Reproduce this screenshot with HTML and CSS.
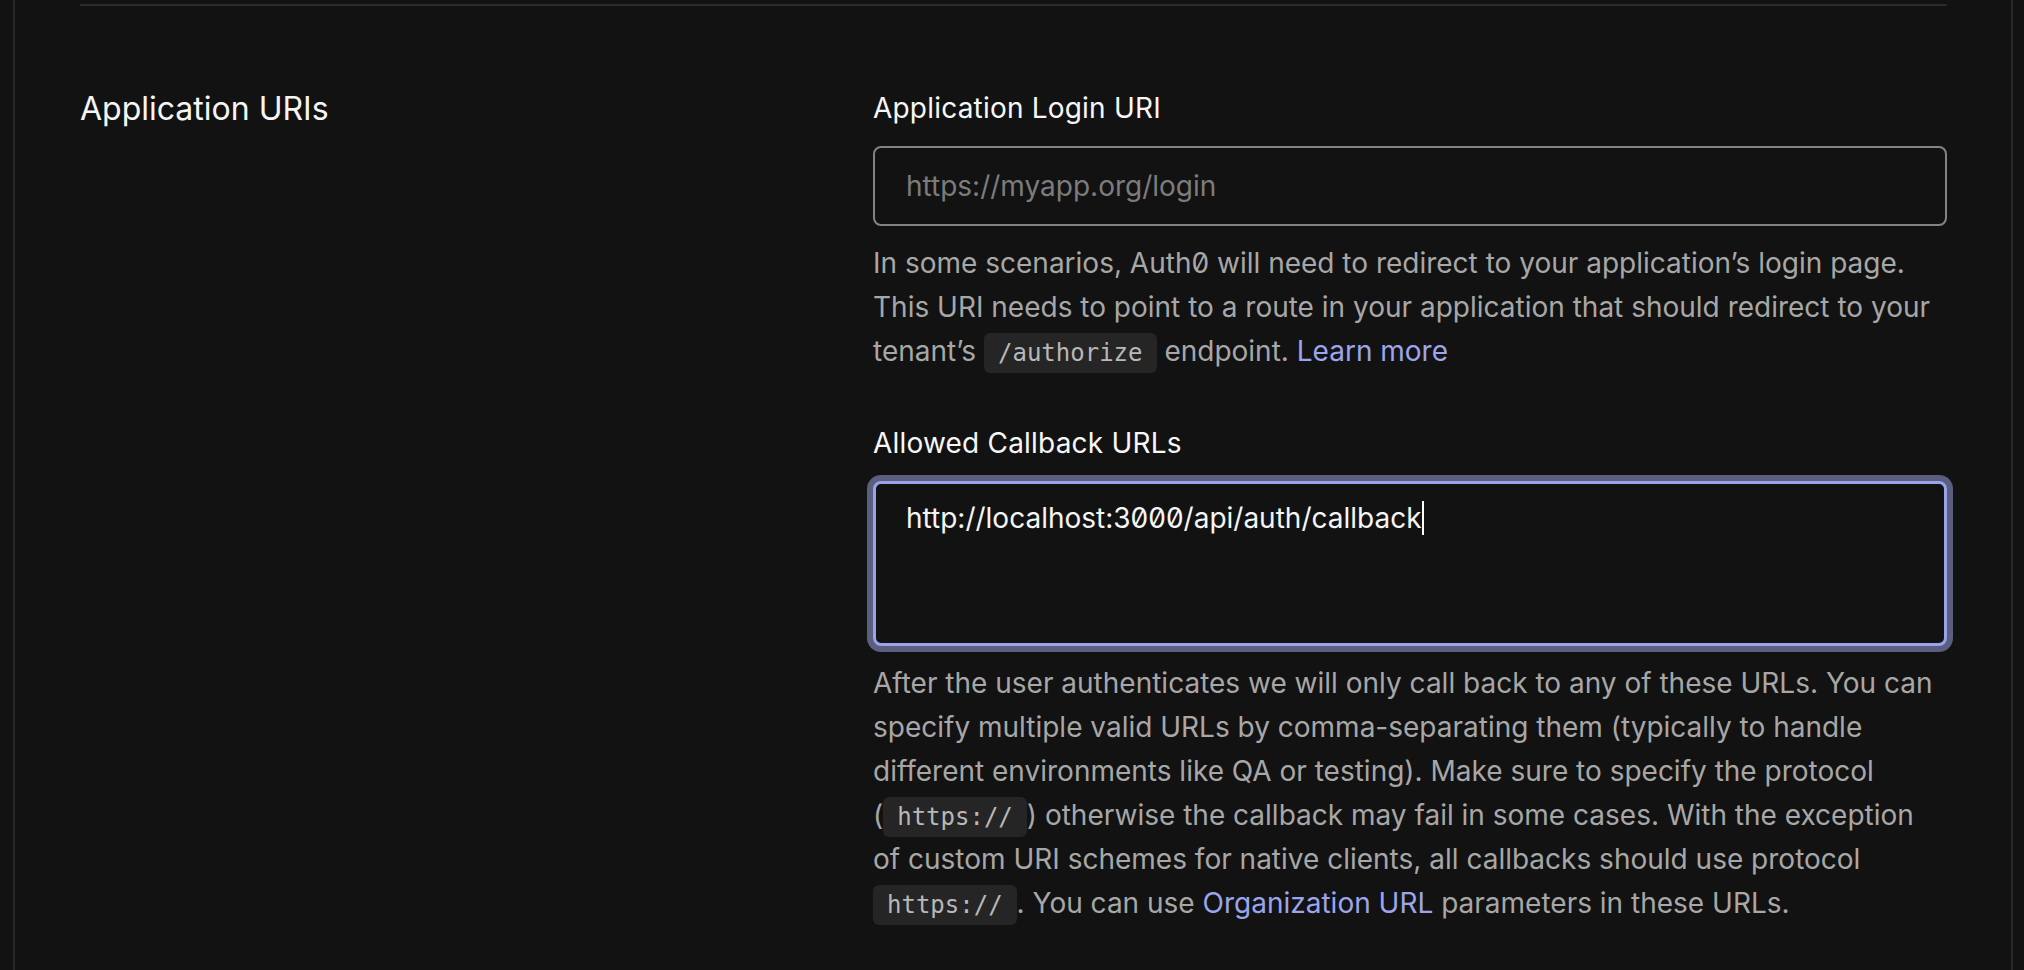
FILE: index.html
```html
<!DOCTYPE html>
<html lang="en">
<head>
<meta charset="utf-8">
<title>Application URIs</title>
<link rel="stylesheet" href="styles.css">
</head>
<body>
<div class="frame">
  <div class="divider"></div>
  <section class="section">
    <h2 class="section-title">Application URIs</h2>
    <div class="fields">
      <div class="field">
        <label class="field-label" for="login-uri">Application Login URI</label>
        <input class="text-input" id="login-uri" type="text" placeholder="https://myapp.org/login">
        <p class="help">In some scenarios, Auth0 will need to redirect to your application’s login page. This URI needs to point to a route in your application that should redirect to your tenant’s <code class="chip">/authorize</code> endpoint. <a class="link" href="#">Learn more</a></p>
      </div>
      <div class="field field-gap">
        <label class="field-label">Allowed Callback URLs</label>
        <div class="textarea is-focused" role="textbox" aria-multiline="true">http://localhost:3000/api/auth/callback<span class="caret"></span></div>
        <p class="help">After the user authenticates we will only call back to any of these URLs. You can specify multiple valid URLs by comma-separating them (typically to handle different environments like QA or testing). Make sure to specify the protocol (<code class="chip">https://</code>) otherwise the callback may fail in some cases. With the exception of custom URI schemes for native clients, all callbacks should use protocol <code class="chip">https://</code>. You can use <a class="link" href="#">Organization URL</a> parameters in these URLs.</p>
      </div>
    </div>
  </section>
</div>
</body>
</html>
```

FILE: styles.css
```css
* {
  box-sizing: border-box;
}

html, body {
  margin: 0;
  padding: 0;
  background: #121212;
}

body {
  font-family: Inter, "Noto Sans", sans-serif;
  font-feature-settings: "zero" 1;
  color: #f2f2f2;
  height: 970px;
  overflow: hidden;
}

.frame {
  margin-left: 13px;
  width: 2000px;
  min-height: 970px;
  border-left: 2px solid #282828;
  border-right: 2px solid #282828;
  padding: 4px 64px 0 65px;
}

.divider {
  height: 2px;
  background: #2a2a2a;
}

.section {
  display: grid;
  grid-template-columns: 793px 1fr;
  padding-top: 80px;
}

.section-title {
  margin: 1px 0 0;
  font-size: 32px;
  line-height: 44px;
  font-weight: 400;
  color: #f5f5f5;
}

.fields {
  display: flex;
  flex-direction: column;
}

.field {
  display: flex;
  flex-direction: column;
}

.field-gap {
  margin-top: 48px;
}

.field-label {
  font-size: 28px;
  line-height: 44px;
  font-weight: 400;
  letter-spacing: 0.2px;
  color: #f7f7f7;
}

.text-input {
  margin-top: 16px;
  height: 80px;
  width: 100%;
  border: 2px solid #838383;
  border-radius: 8px;
  background: #121212;
  padding: 0 30px 0 31px;
  font-family: Inter, "Noto Sans", sans-serif;
  font-feature-settings: "zero" 1;
  font-size: 28px;
  color: #f2f2f2;
  outline: none;
}

.text-input::placeholder {
  color: #7c7c7c;
}

.textarea {
  margin-top: 16px;
  height: 165px;
  border: 3px solid #9aa3e8;
  border-radius: 8px;
  box-shadow: 0 0 0 6px #5a5f80;
  background: #121212;
  padding: 12px 30px;
  font-size: 28px;
  line-height: 44px;
  color: #f5f5f5;
}

.caret {
  display: inline-block;
  width: 2px;
  height: 34px;
  background: #ffffff;
  vertical-align: -7px;
}

.help {
  margin: 15px 0 0;
  font-size: 28px;
  line-height: 44px;
  color: #a7a7a7;
}

.chip {
  font-family: "DejaVu Sans Mono", "Liberation Mono", monospace;
  font-size: 24px;
  line-height: 1;
  color: #b8b8b8;
  background: #252525;
  border-radius: 6px;
  padding: 6px 14px;
}

.link {
  color: #9ca5ec;
  text-decoration: none;
}
```
